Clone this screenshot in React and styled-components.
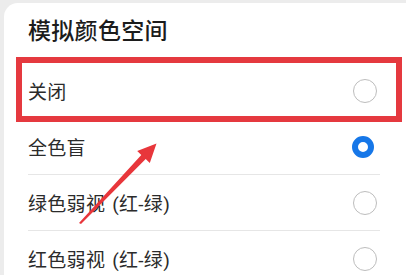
import styled, { createGlobalStyle } from "styled-components";

const GlobalStyle = createGlobalStyle`
  html, body {
    margin: 0;
    padding: 0;
    background: #ececec;
    overflow: hidden;
  }
  body {
    font-family: "Roboto", "Noto Sans CJK SC", "Noto Sans", sans-serif;
  }
`;

const options = [
  { label: "关闭", checked: false },
  { label: "全色盲", checked: true },
  { label: "绿色弱视 (红-绿)", checked: false },
  { label: "红色弱视 (红-绿)", checked: false },
];

const Page = styled.div`
  position: relative;
  width: 406px;
  height: 275px;
  overflow: hidden;
`;

const Card = styled.div`
  margin: 3px 0 0 4px;
  height: 320px;
  background: #ffffff;
  border-radius: 14px 0 0 0;
  padding: 0 26px 0 24px;
`;

const Title = styled.h2`
  box-sizing: border-box;
  margin: 0;
  height: 60px;
  padding-bottom: 8px;
  display: flex;
  align-items: center;
  font-size: 23px;
  font-weight: 500;
  color: #1c1c1c;
  letter-spacing: 0.3px;
`;

const Row = styled.div`
  box-sizing: border-box;
  height: 56px;
  display: flex;
  align-items: center;
  justify-content: space-between;
  border-bottom: 1px solid #e6e6e6;
`;

const Label = styled.span`
  font-size: 19px;
  color: #2b2b2b;
  letter-spacing: 0.3px;
  word-spacing: 2px;
`;

const Radio = styled.span`
  box-sizing: border-box;
  width: ${({ $checked }) => ($checked ? "22px" : "24px")};
  height: ${({ $checked }) => ($checked ? "22px" : "24px")};
  margin-right: ${({ $checked }) => ($checked ? "6px" : "3px")};
  border-radius: 50%;
  border: ${({ $checked }) =>
    $checked ? "6px solid #1677e8" : "1.5px solid #bdbdbd"};
  background: #fff;
`;

const Highlight = styled.div`
  position: absolute;
  left: 16px;
  top: 57px;
  width: 386px;
  height: 65px;
  box-sizing: border-box;
  border: 6px solid #e5393f;
  pointer-events: none;
`;

const ArrowLayer = styled.svg`
  position: absolute;
  left: 0;
  top: 0;
  pointer-events: none;
`;

export default function App() {
  return (
    <>
      <GlobalStyle />
      <Page>
        <Card>
          <Title>模拟颜色空间</Title>
          {options.map((o) => (
            <Row key={o.label}>
              <Label>{o.label}</Label>
              <Radio $checked={o.checked} />
            </Row>
          ))}
        </Card>
        <Highlight />
        <ArrowLayer width="406" height="275" viewBox="0 0 406 275">
          <polygon
            points="79,223 141.3,154.9 137.2,151 156.5,143.5 149.8,163 145.7,159.1 81,224"
            fill="#e8363b"
          />
        </ArrowLayer>
      </Page>
    </>
  );
}
